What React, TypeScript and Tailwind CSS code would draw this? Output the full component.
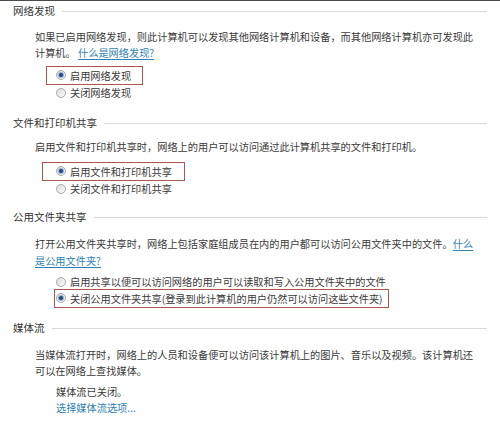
import React from "react";

const font = { fontFamily: '"Noto Sans CJK SC", "Noto Sans", sans-serif' };

function Header({ title, className = "" }: { title: string; className?: string }) {
  return (
    <div className={`flex items-center h-5 pl-[13px] pr-[13px] text-[10.5px] ${className}`}>
      <span className="text-[#333]">{title}</span>
      <div className="flex-1 h-px bg-[#d9d9d9] ml-[7px]" />
    </div>
  );
}

function Radio({ checked }: { checked?: boolean }) {
  return (
    <span className="w-[10px] h-[10px] shrink-0 rounded-full border border-[#a9a9a9] bg-gradient-to-br from-[#dcdcdc] to-[#fbfbfb] flex items-center justify-center">
      {checked && <span className="w-[4px] h-[4px] rounded-full bg-[#26457a] ring-1 ring-[#8fb0d8]" />}
    </span>
  );
}

function Option({ label, checked, className = "" }: { label: string; checked?: boolean; className?: string }) {
  return (
    <div className={`flex items-center gap-[4px] whitespace-nowrap ${className}`}>
      <Radio checked={checked} />
      <span>{label}</span>
    </div>
  );
}

const link = "text-[#2f7fb5] underline underline-offset-2";

export default function App() {
  return (
    <div
      className="w-[500px] h-[430px] bg-white border-t border-[#4a4a4a] text-[10.2px] text-[#3a3a3a] overflow-hidden"
      style={font}
    >
      <Header title="网络发现" />
      <p className="mt-[8px] pl-[35px] leading-[16px] whitespace-nowrap">
        如果已启用网络发现，则此计算机可以发现其他网络计算机和设备，而其他网络计算机亦可发现此
        <br />
        计算机。 <span className={link}>什么是网络发现?</span>
      </p>
      <div className="mt-[5px] ml-[46px] w-[97px] h-[19px] border border-[#b0544f] pl-[9px] flex items-center">
        <Option label="启用网络发现" checked />
      </div>
      <Option label="关闭网络发现" className="ml-[56px] h-[16px]" />

      <Header title="文件和打印机共享" className="mt-[12px]" />
      <p className="mt-[6px] pl-[35px] leading-[16px] whitespace-nowrap">
        启用文件和打印机共享时，网络上的用户可以访问通过此计算机共享的文件和打印机。
      </p>
      <div className="mt-[7px] ml-[42px] w-[143px] h-[19px] border border-[#b0544f] pl-[13px] flex items-center">
        <Option label="启用文件和打印机共享" checked />
      </div>
      <Option label="关闭文件和打印机共享" className="ml-[56px] h-[16px]" />

      <Header title="公用文件夹共享" className="mt-[10px]" />
      <p className="mt-[8px] pl-[35px] leading-[17px] whitespace-nowrap">
        打开公用文件夹共享时，网络上包括家庭组成员在内的用户都可以访问公用文件夹中的文件。
        <span className={link}>什么</span>
        <br />
        <span className={link}>是公用文件夹?</span>
      </p>
      <Option label="启用共享以便可以访问网络的用户可以读取和写入公用文件夹中的文件" className="mt-[6px] ml-[56px] h-[14px]" />
      <div className="ml-[54px] w-[335px] h-[19px] border border-[#b0544f] pl-[1px] flex items-center">
        <Option label="关闭公用文件夹共享(登录到此计算机的用户仍然可以访问这些文件夹)" checked />
      </div>

      <Header title="媒体流" className="mt-[10px]" />
      <p className="mt-[9px] pl-[35px] leading-[16px] whitespace-nowrap">
        当媒体流打开时，网络上的人员和设备便可以访问该计算机上的图片、音乐以及视频。该计算机还
        <br />
        可以在网络上查找媒体。
      </p>
      <div className="mt-[5px] pl-[56px] leading-[16px]">
        <div>媒体流已关闭。</div>
        <div className="text-[#2f7fb5]">选择媒体流选项...</div>
      </div>
    </div>
  );
}
